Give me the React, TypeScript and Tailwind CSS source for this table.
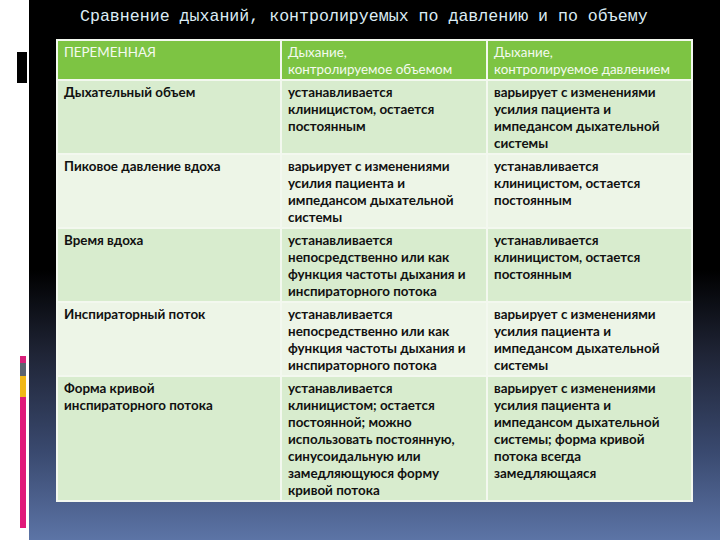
import React from 'react';

type Row = { label: string[]; vol: string[]; press: string[] };

const rows: Row[] = [
  {
    label: ['Дыхательный объем'],
    vol: ['устанавливается', 'клиницистом, остается', 'постоянным'],
    press: ['варьирует с изменениями', 'усилия пациента и', 'импедансом дыхательной', 'системы'],
  },
  {
    label: ['Пиковое давление вдоха'],
    vol: ['варьирует с изменениями', 'усилия пациента и', 'импедансом дыхательной', 'системы'],
    press: ['устанавливается', 'клиницистом, остается', 'постоянным'],
  },
  {
    label: ['Время вдоха'],
    vol: ['устанавливается', 'непосредственно или как', 'функция частоты дыхания и', 'инспираторного потока'],
    press: ['устанавливается', 'клиницистом, остается', 'постоянным'],
  },
  {
    label: ['Инспираторный поток'],
    vol: ['устанавливается', 'непосредственно или как', 'функция частоты дыхания и', 'инспираторного потока'],
    press: ['варьирует с изменениями', 'усилия пациента и', 'импедансом дыхательной', 'системы'],
  },
  {
    label: ['Форма кривой', 'инспираторного потока'],
    vol: [
      'устанавливается',
      'клиницистом; остается',
      'постоянной; можно',
      'использовать постоянную,',
      'синусоидальную или',
      'замедляющуюся форму',
      'кривой потока',
    ],
    press: [
      'варьирует с изменениями',
      'усилия пациента и',
      'импедансом дыхательной',
      'системы; форма кривой',
      'потока всегда',
      'замедляющаяся',
    ],
  },
];

function Lines({ items }: { items: string[] }) {
  return (
    <>
      {items.map((t, i) => (
        <div key={i} className="whitespace-nowrap">
          {t}
        </div>
      ))}
    </>
  );
}

function Cell({ children, className = '' }: { children: React.ReactNode; className?: string }) {
  return (
    <td className={`border-2 border-[#f3f8ef] px-[6px] pt-[3px] pb-[1px] align-top ${className}`}>{children}</td>
  );
}

export default function App() {
  return (
    <div className="flex h-[540px] w-[720px] overflow-hidden bg-white">
      {/* left decorative strip */}
      <div className="flex w-[29px] shrink-0 flex-col">
        <div className="ml-[17px] mt-[52px] h-[31px] w-[10px] bg-black" />
        <div className="ml-[20px] mt-[273px] flex w-[6px] flex-col">
          <div className="h-[7px] bg-[#d8207a]" />
          <div className="h-[13px] bg-[#5b6470]" />
          <div className="h-[21px] bg-[#f0b818]" />
          <div className="h-[131px] bg-[#e0197a]" />
        </div>
      </div>

      <div className="flex flex-1 flex-col bg-[linear-gradient(to_bottom,#000_0%,#000_50%,#1e2334_65%,#3a4a70_84%,#5c74a6_100%)]">
        <h1 className="ml-[51px] mt-[6px] h-[33px] font-['Liberation_Mono',monospace] text-[16.6px] leading-[22px] text-[#dcecf4]">
          Сравнение дыханий, контролируемых по давлению и по объему
        </h1>

        <table className="ml-[27px] w-[635px] table-fixed border-collapse font-['Lato','Open_Sans',sans-serif] text-[13.4px] leading-[17px] text-[#111]">
          <colgroup>
            <col className="w-[224px]" />
            <col className="w-[206px]" />
            <col className="w-[205px]" />
          </colgroup>
          <thead>
            <tr className="bg-[#7dc443] text-[#f4faef]">
              <Cell>ПЕРЕМЕННАЯ</Cell>
              <Cell>
                <Lines items={['Дыхание,', 'контролируемое объемом']} />
              </Cell>
              <Cell>
                <Lines items={['Дыхание,', 'контролируемое давлением']} />
              </Cell>
            </tr>
          </thead>
          <tbody className="font-bold">
            {rows.map((r, i) => (
              <tr key={i} className={i % 2 === 0 ? 'bg-[#d8ecce]' : 'bg-[#edf5e7]'}>
                <Cell>
                  <Lines items={r.label} />
                </Cell>
                <Cell>
                  <Lines items={r.vol} />
                </Cell>
                <Cell>
                  <Lines items={r.press} />
                </Cell>
              </tr>
            ))}
          </tbody>
        </table>
      </div>
    </div>
  );
}
